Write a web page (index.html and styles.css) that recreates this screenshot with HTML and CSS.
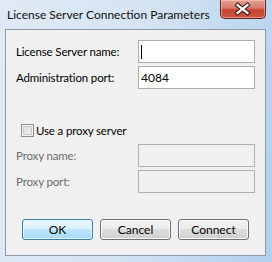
FILE: index.html
```html
<!DOCTYPE html>
<html lang="en">
<head>
    <meta charset="UTF-8">
    <title>License Server Connection Parameters</title>
    <link rel="stylesheet" href="styles.css">
</head>
<body>
    <div class="window">
        <div class="titlebar">
            <span class="title">License Server Connection Parameters</span>
            <button class="close-btn" title="Close">
                <svg width="46" height="19" viewBox="0 0 46 19">
                    <path d="M18 5 L28 13 M28 5 L18 13" stroke="#3d1d18" stroke-width="4.6" stroke-linecap="square" fill="none"/>
                    <path d="M18 5 L28 13 M28 5 L18 13" stroke="#ffffff" stroke-width="2.4" stroke-linecap="square" fill="none"/>
                </svg>
            </button>
        </div>

        <div class="client">
            <div class="fields">
                <label>License Server name:</label>
                <div class="textbox"><span class="caret"></span></div>
                <label>Administration port:</label>
                <div class="textbox">4084</div>
            </div>

            <label class="check-row"><span class="checkbox"></span>Use a proxy server</label>

            <div class="fields disabled">
                <label>Proxy name:</label>
                <div class="textbox"></div>
                <label>Proxy port:</label>
                <div class="textbox"></div>
            </div>

            <div class="buttons">
                <button class="btn default">OK</button>
                <button class="btn">Cancel</button>
                <button class="btn">Connect</button>
            </div>
        </div>
    </div>
</body>
</html>
```

FILE: styles.css
```css
* {
    margin: 0;
    padding: 0;
    box-sizing: border-box;
    font-family: "Segoe UI", Lato, sans-serif;
}
body {
    width: 272px;
    height: 262px;
    overflow: hidden;
}
.window {
    height: 262px;
    background: linear-gradient(100deg, #e0eaf5 0%, #d4e3f3 50%, #b2cfee 100%);
}
.titlebar {
    display: flex;
    align-items: flex-start;
    height: 29px;
}
.title {
    padding: 7px 0 0 7px;
    font-size: 12px;
    line-height: 16px;
    color: #111;
}
.close-btn {
    margin-left: auto;
    margin-right: 6px;
    width: 46px;
    height: 19px;
    border: 1px solid #5a2620;
    border-top: none;
    border-radius: 0 0 5px 5px;
    background: linear-gradient(#e5a294 0%, #d77a68 45%, #c4432f 55%, #d0563f 100%);
    box-shadow: inset 0 0 0 1px rgba(255, 210, 200, 0.5);
    display: flex;
    align-items: center;
    justify-content: center;
}
.close-btn svg {
    display: block;
    margin-left: -1px;
}
.client {
    margin-left: 5px;
    width: 261px;
    height: 227px;
    border: 1px solid #8e9aa7;
    background-color: #f0f0f0;
}
.fields {
    display: grid;
    grid-template-columns: 1fr 117px;
    grid-auto-rows: 23px;
    row-gap: 3px;
    align-items: center;
    padding: 0 10px;
    margin-top: 10px;
    font-size: 11.5px;
    letter-spacing: -0.15px;
    color: #000;
}
.fields.disabled {
    margin-top: 7px;
    color: #6d6d6d;
}
.textbox {
    height: 23px;
    display: flex;
    align-items: center;
    padding-left: 2px;
    border: 1px solid #abadb3;
    background-color: #fff;
    font-size: 12px;
    letter-spacing: 0;
}
.fields.disabled .textbox {
    background-color: #f0f0f0;
    border-color: #afafaf;
}
.caret {
    width: 1px;
    height: 14px;
    background-color: #000;
}
.check-row {
    display: flex;
    align-items: center;
    gap: 2px;
    height: 13px;
    margin: 35px 0 0 15px;
    font-size: 11.5px;
    letter-spacing: -0.15px;
    color: #000;
}
.checkbox {
    width: 13px;
    height: 13px;
    border: 1px solid #8f8f8f;
    background: linear-gradient(135deg, #d8d8d8, #f6f6f6);
    box-shadow: inset 0 0 0 1px #f4f4f4, inset 0 0 0 2px #c9c9c9;
}
.buttons {
    display: flex;
    gap: 7px;
    margin-top: 26px;
    padding-left: 16px;
}
.btn {
    width: 71px;
    height: 21px;
    border: 1px solid #707070;
    border-radius: 3px;
    background: linear-gradient(#f2f2f2 0%, #ebebeb 50%, #dddddd 50%, #cfcfcf 100%);
    box-shadow: inset 0 0 0 1px #fbfbfb;
    font-size: 12px;
    color: #000;
}
.btn.default {
    border-color: #3c7fb1;
    background: linear-gradient(#eaf6fd 0%, #d9f0fc 50%, #bee6fd 50%, #a7d9f5 100%);
    box-shadow: inset 0 0 0 1px #e6f4fc;
}
```
